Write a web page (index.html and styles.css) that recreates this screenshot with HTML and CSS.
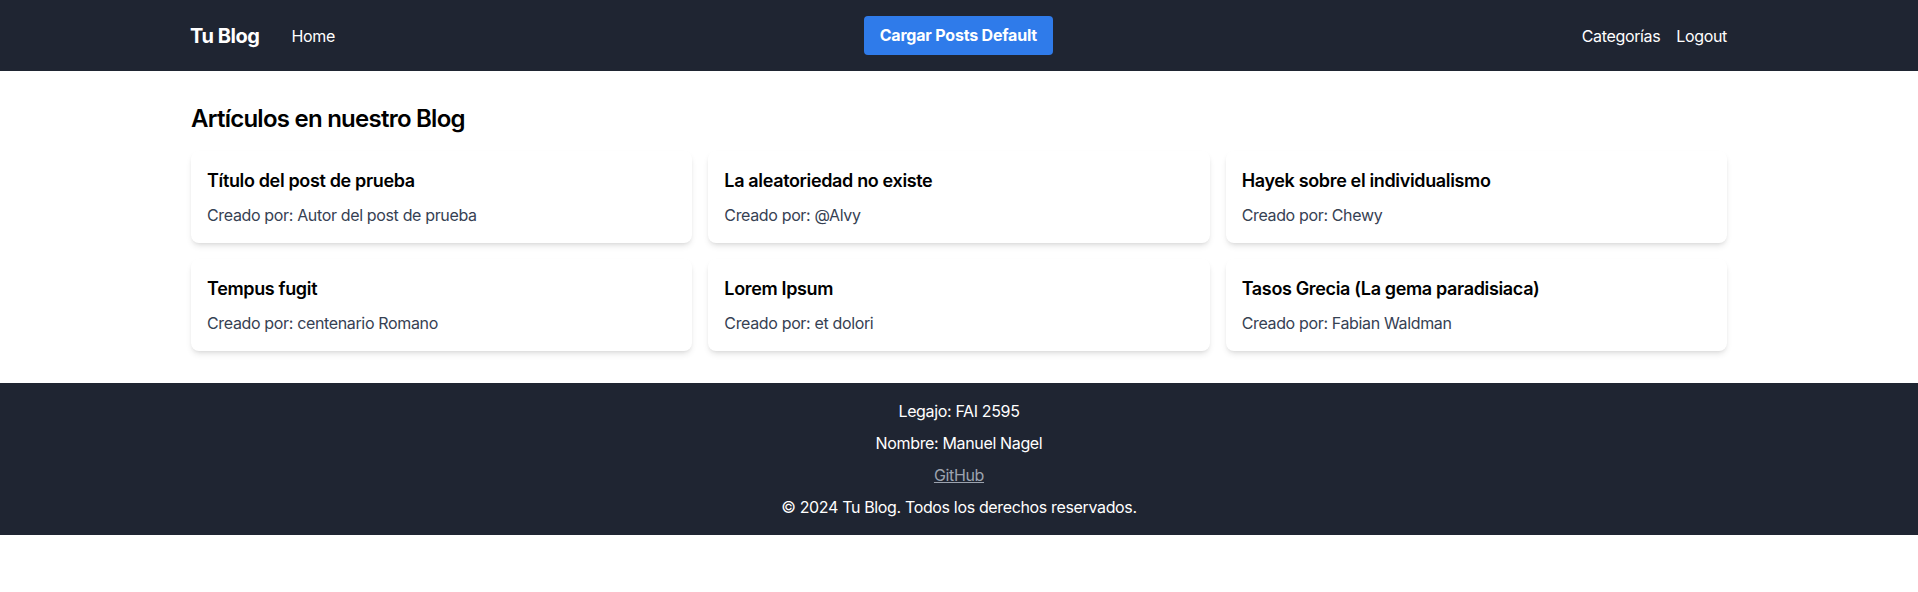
FILE: index.html
```html
<!DOCTYPE html>
<html lang="es">
<head>
<meta charset="utf-8">
<title>Tu Blog</title>
<link rel="stylesheet" href="styles.css">
</head>
<body>
<header class="nav">
  <div class="container nav-inner">
    <div class="nav-left">
      <a class="brand" href="#">Tu Blog</a>
      <a class="nav-link" href="#">Home</a>
    </div>
    <button class="btn">Cargar Posts Default</button>
    <div class="nav-right">
      <a class="nav-link" href="#">Categorías</a>
      <a class="nav-link" href="#">Logout</a>
    </div>
  </div>
</header>
<main class="container main">
  <h2 class="page-title">Artículos en nuestro Blog</h2>
  <div class="grid">
    <div class="card"><h3 class="card-title">Título del post de prueba</h3><p class="card-meta">Creado por: Autor del post de prueba</p></div>
    <div class="card"><h3 class="card-title">La aleatoriedad no existe</h3><p class="card-meta">Creado por: @Alvy</p></div>
    <div class="card"><h3 class="card-title">Hayek sobre el individualismo</h3><p class="card-meta">Creado por: Chewy</p></div>
    <div class="card"><h3 class="card-title">Tempus fugit</h3><p class="card-meta">Creado por: centenario Romano</p></div>
    <div class="card"><h3 class="card-title">Lorem Ipsum</h3><p class="card-meta">Creado por: et dolori</p></div>
    <div class="card"><h3 class="card-title">Tasos Grecia (La gema paradisiaca)</h3><p class="card-meta">Creado por: Fabian Waldman</p></div>
  </div>
</main>
<footer class="footer">
  <p>Legajo: FAI 2595</p>
  <p>Nombre: Manuel Nagel</p>
  <p><a class="gh" href="#">GitHub</a></p>
  <p>© 2024 Tu Blog. Todos los derechos reservados.</p>
</footer>
</body>
</html>
```
FILE: styles.css
```css
* { box-sizing: border-box; }
html, body { margin: 0; padding: 0; }
body {
  font-family: Inter, "Liberation Sans", Arial, sans-serif;
  font-size: 16px;
  line-height: 24px;
  letter-spacing: -0.35px;
  color: #000;
  background: #fff;
}
a { color: inherit; text-decoration: none; }
.container { width: 1536px; margin: 0 auto; }
.nav { background: #1f2532; color: #fff; padding: 16px 0; height: 71px; }
.nav-inner { display: flex; align-items: center; justify-content: space-between; height: 39px; }
.nav-left { display: flex; align-items: center; gap: 32px; }
.nav-right { display: flex; align-items: center; gap: 16px; }
.brand { font-size: 20px; font-weight: 700; line-height: 28px; letter-spacing: -0.45px; margin-left: -1px; }
.nav-link { font-size: 16px; line-height: 24px; }
.btn {
  font-family: inherit; font-size: 16px; font-weight: 700; line-height: 23px;
  letter-spacing: -0.2px; white-space: nowrap;
  color: #fff; background: #2f7bea; border: 0; border-radius: 4px;
  padding: 8px 16px; height: 39px; cursor: pointer;
}
.main { padding: 32px 0; }
.page-title { margin: 0 0 16px; font-size: 24px; line-height: 32px; font-weight: 600; letter-spacing: -0.75px; }
.grid { display: grid; grid-template-columns: repeat(3, 1fr); gap: 16px; }
.card {
  background: #fff; border-radius: 8px; padding: 16px;
  box-shadow: 0 4px 6px -1px rgba(0,0,0,0.1), 0 2px 4px -2px rgba(0,0,0,0.1);
  height: 92px;
}
.card-title { margin: 0 0 8px; font-size: 18px; line-height: 28px; font-weight: 600; letter-spacing: -0.35px; }
.card-meta { margin: 0; color: #364153; }
.footer { background: #1f2532; color: #fff; text-align: center; padding: 16px 0; height: 152px; }
.footer p { margin: 0 0 8px; }
.footer p:last-child { margin-bottom: 0; }
.gh { color: #9ca3af; text-decoration: underline; }
```
